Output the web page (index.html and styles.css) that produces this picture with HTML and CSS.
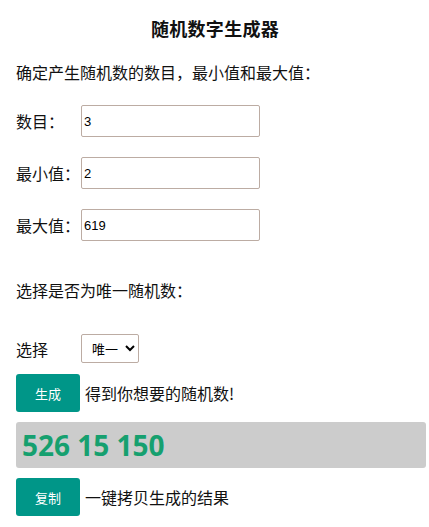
FILE: index.html
```html
<!DOCTYPE html>
<html lang="zh">
<head>
<meta charset="utf-8">
<title>随机数字生成器</title>
<link rel="stylesheet" href="styles.css">
</head>
<body>
<div class="page">
  <h1 class="title">随机数字生成器</h1>
  <p class="intro">确定产生随机数的数目，最小值和最大值：</p>
  <div class="fields">
    <div class="row"><label class="label">数目：</label><input class="field" type="text" value="3"></div>
    <div class="row"><label class="label">最小值：</label><input class="field" type="text" value="2"></div>
    <div class="row"><label class="label">最大值：</label><input class="field" type="text" value="619"></div>
  </div>
  <p class="intro unique">选择是否为唯一随机数：</p>
  <div class="row select-row"><label class="label">选择</label>
    <select class="choice"><option>唯一</option><option>不唯一</option></select>
  </div>
  <div class="action gen"><button class="btn">生成</button><span class="hint">得到你想要的随机数!</span></div>
  <div class="result">526 15 150</div>
  <div class="action copy"><button class="btn">复制</button><span class="hint">一键拷贝生成的结果</span></div>
</div>
</body>
</html>
```
FILE: styles.css
```css
html, body {
  margin: 0;
  padding: 0;
  background: #fff;
}
body {
  font-family: "Noto Sans CJK SC", "Noto Sans", sans-serif;
  color: #111;
  font-size: 16px;
}
.page {
  width: 410px;
  padding: 16px 0 0 16px;
  display: flex;
  flex-direction: column;
}
.title {
  margin: 0;
  font-size: 18px;
  line-height: 24px;
  font-weight: 700;
  text-align: center;
  padding-right: 12px;
  letter-spacing: 0.3px;
}
.intro {
  margin: 20px 0 0 0;
  line-height: 24px;
  font-size: 16px;
}
.fields {
  margin-top: 21px;
  display: flex;
  flex-direction: column;
  gap: 20px;
}
.row {
  display: flex;
  align-items: center;
}
.label {
  width: 65px;
  line-height: 24px;
  font-size: 16px;
}
.field {
  box-sizing: border-box;
  width: 179px;
  height: 32px;
  border: 1px solid #bcaca3;
  border-radius: 2px;
  padding: 0 2px;
  font-family: "Liberation Sans", Arial, sans-serif;
  font-size: 13px;
  color: #000;
  outline: none;
}
.unique {
  margin-top: 37px;
}
.select-row {
  margin-top: 32px;
}
.choice {
  box-sizing: border-box;
  width: 58px;
  height: 29px;
  border: 1px solid #bcaca3;
  border-radius: 2px;
  background: #fff;
  font-family: "Noto Sans CJK SC", sans-serif;
  font-size: 13px;
  color: #000;
  padding: 0 0 0 6px;
}
.action {
  display: flex;
  align-items: center;
  gap: 5px;
}
.gen {
  margin-top: 11px;
}
.copy {
  margin-top: 10px;
}
.btn {
  width: 64px;
  height: 38px;
  border: none;
  border-radius: 3px;
  background: #009688;
  color: #fff;
  font-family: "Noto Sans CJK SC", sans-serif;
  font-size: 13px;
  padding: 0;
}
.hint {
  font-size: 16px;
  line-height: 24px;
}
.result {
  margin-top: 10px;
  height: 46px;
  box-sizing: border-box;
  background: #cccccc;
  border-radius: 3px;
  padding-left: 6px;
  display: flex;
  align-items: center;
  font-family: "Open Sans", sans-serif;
  font-weight: 700;
  font-size: 28px;
  color: #16a06f;
}
```
